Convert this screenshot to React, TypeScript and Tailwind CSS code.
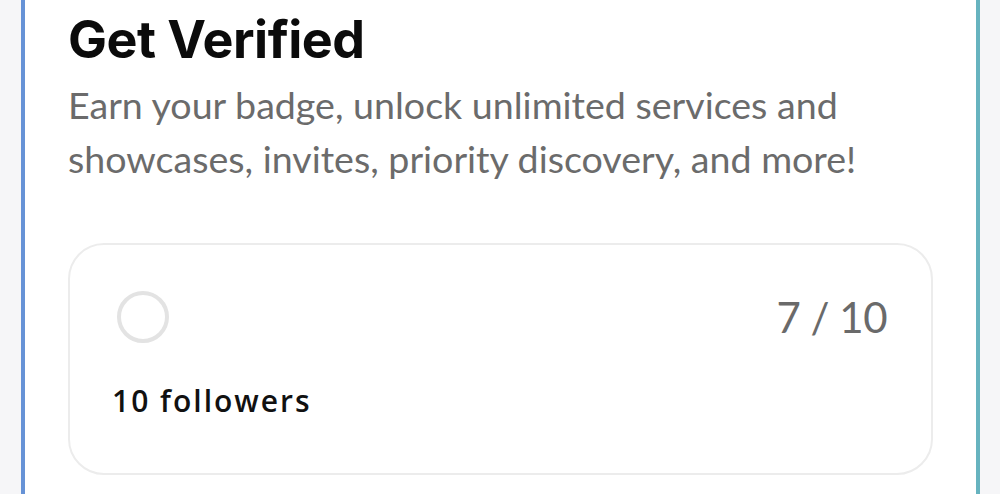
import React from "react";

export default function App() {
  return (
    <div className="w-[1000px] h-[494px] overflow-hidden bg-[#f6f6f8] pl-[21px] pr-[20px]">
      <div className="h-full bg-gradient-to-r from-[#6692d6] to-[#67b3bf] px-[4px]">
        <div className="h-full bg-white px-[43px] pt-[10px]">
          <h1 className="text-[52px] leading-[60px] font-bold text-[#0b0b0b] tracking-[-0.5px] font-['Inter',sans-serif]">
            Get Verified
          </h1>
          <p className="mt-[8px] text-[37.6px] leading-[54px] text-[#6b6b6b] font-['Lato',sans-serif] max-w-[850px]">
            Earn your badge, unlock unlimited services and showcases, invites, priority discovery, and more!
          </p>
          <div className="mt-[57px] h-[232px] rounded-[36px] border-2 border-[#ececec] pl-[47px] pr-[44px] pt-[46px]">
            <div className="flex items-center justify-between">
              <div className="w-[52px] h-[52px] rounded-full border-[4px] border-[#e3e3e3]" />
              <div className="text-[42px] leading-none tracking-[-0.5px] text-[#6a6a6a] font-['Lato',sans-serif] font-normal">
                7 / 10
              </div>
            </div>
            <div className="-ml-[5px] mt-[43px] text-[30px] leading-none font-semibold tracking-[2px] text-[#111] font-['Open_Sans',sans-serif]">
              10 followers
            </div>
          </div>
        </div>
      </div>
    </div>
  );
}
